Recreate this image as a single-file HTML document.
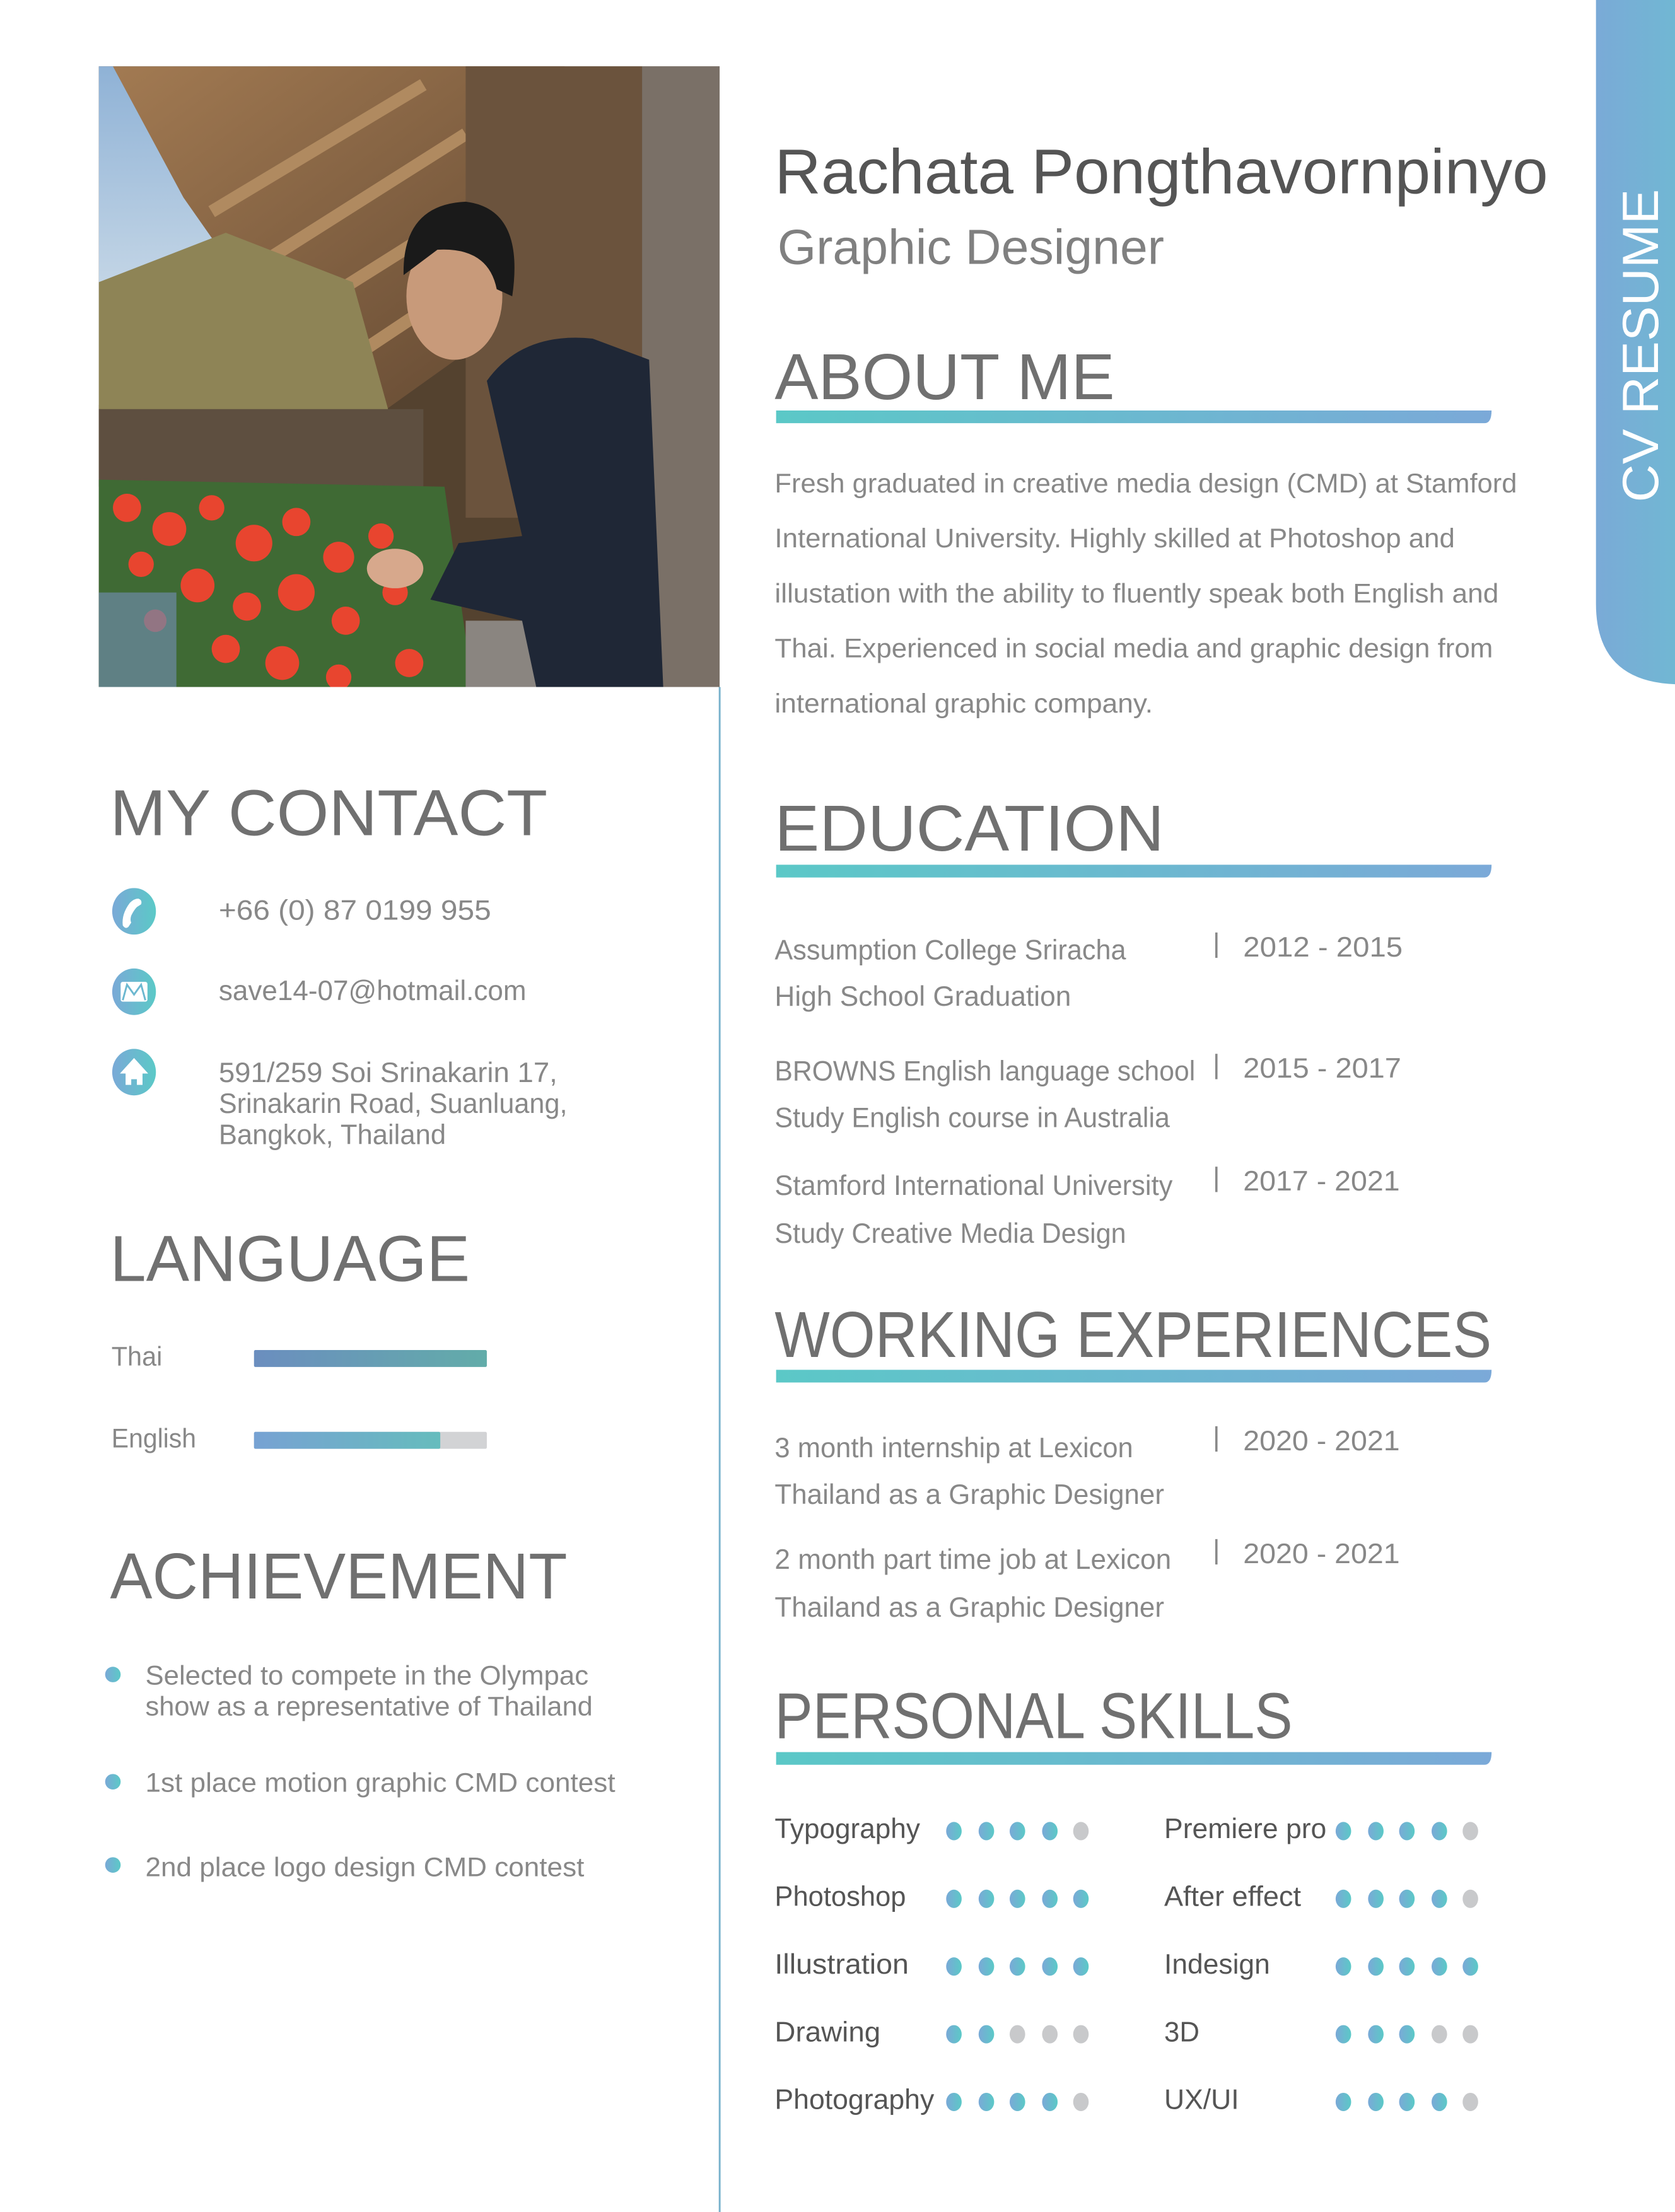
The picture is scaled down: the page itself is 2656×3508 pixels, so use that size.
<!DOCTYPE html>
<html><head><meta charset="utf-8"><style>
html,body{margin:0;padding:0;background:#fff;}
svg{display:block;}
text{font-family:"Liberation Sans",sans-serif;}
</style></head><body>
<svg xmlns="http://www.w3.org/2000/svg" width="2656" height="3508" viewBox="0 0 1187 1568" preserveAspectRatio="none">
<defs>
<linearGradient id="bar" x1="0" x2="1"><stop offset="0" stop-color="#5bc8c7"/><stop offset="1" stop-color="#7ba9d8"/></linearGradient>
<linearGradient id="tab" x1="0" x2="1"><stop offset="0" stop-color="#7aaad7"/><stop offset="1" stop-color="#71b7d3"/></linearGradient>
<linearGradient id="ic" x1="0" x2="1"><stop offset="0" stop-color="#7aa9d7"/><stop offset="1" stop-color="#5bc9c7"/></linearGradient>
<linearGradient id="thai" x1="0" x2="1"><stop offset="0" stop-color="#6b8ebf"/><stop offset="1" stop-color="#62aca9"/></linearGradient>
<linearGradient id="eng" x1="0" x2="1"><stop offset="0" stop-color="#77a2d3"/><stop offset="1" stop-color="#66bcbd"/></linearGradient>
<linearGradient id="sky" x1="0" y1="0" x2="0" y2="1"><stop offset="0" stop-color="#8fb2d6"/><stop offset="1" stop-color="#dfe8ee"/></linearGradient>
<linearGradient id="wood" x1="0" y1="0" x2="1" y2="1"><stop offset="0" stop-color="#a27a52"/><stop offset="1" stop-color="#5e4530"/></linearGradient>
<clipPath id="ph"><rect x="70" y="47" width="440" height="440"/></clipPath>
</defs>

<!-- photo -->
<g clip-path="url(#ph)">
<rect x="70" y="47" width="440" height="440" fill="#54422f"/>
<rect x="70" y="47" width="120" height="240" fill="url(#sky)"/>
<polygon points="80,47 400,47 420,120 330,250 260,300 200,240 130,140" fill="url(#wood)"/>
<g stroke="#b08a60" stroke-width="9">
<line x1="150" y1="150" x2="300" y2="60"/><line x1="180" y1="190" x2="330" y2="95"/><line x1="210" y1="225" x2="345" y2="140"/><line x1="240" y1="260" x2="345" y2="190"/>
</g>
<polygon points="70,200 160,165 250,200 275,290 230,300 70,290" fill="#8e8456"/>
<rect x="70" y="290" width="230" height="55" fill="#5e4f40"/>
<rect x="330" y="47" width="125" height="320" fill="#6b533d"/>
<rect x="455" y="47" width="55" height="440" fill="#7a7067"/>
<polygon points="70,340 315,345 335,487 70,487" fill="#3f6a34"/>
<g fill="#e8452f">
<circle cx="90" cy="360" r="10"/><circle cx="120" cy="375" r="12"/><circle cx="150" cy="360" r="9"/><circle cx="180" cy="385" r="13"/><circle cx="210" cy="370" r="10"/><circle cx="240" cy="395" r="11"/><circle cx="270" cy="380" r="9"/>
<circle cx="100" cy="400" r="9"/><circle cx="140" cy="415" r="12"/><circle cx="175" cy="430" r="10"/><circle cx="210" cy="420" r="13"/><circle cx="245" cy="440" r="10"/><circle cx="280" cy="420" r="9"/>
<circle cx="160" cy="460" r="10"/><circle cx="200" cy="470" r="12"/><circle cx="240" cy="480" r="9"/><circle cx="290" cy="470" r="10"/><circle cx="110" cy="440" r="8"/>
</g>
<rect x="70" y="420" width="55" height="67" fill="#6d8aa6" opacity="0.7"/>
<polygon points="330,440 460,440 470,487 330,487" fill="#8a8580"/>
<path d="M345,270 Q370,235 420,240 L460,255 L470,487 L380,487 L370,440 L305,425 L325,385 L370,380 Z" fill="#1f2736"/>
<ellipse cx="322" cy="210" rx="34" ry="45" fill="#c89a7a"/>
<path d="M286,195 Q285,145 330,143 Q372,148 363,210 L352,205 Q346,175 310,177 Z" fill="#1a1a1a"/>
<ellipse cx="280" cy="403" rx="20" ry="14" fill="#d7a88c"/>
</g>

<!-- vertical line -->
<line x1="510" y1="487" x2="510" y2="1568" stroke="#78b2cc" stroke-width="1.3"/>

<!-- CV tab -->
<path d="M1131,0 H1187 V485 Q1131,483 1131,428 Z" fill="url(#tab)"/>
<text transform="translate(1175,245) rotate(-90)" text-anchor="middle" font-size="36" fill="#fff" textLength="222" lengthAdjust="spacingAndGlyphs">CV RESUME</text>

<!-- header -->
<text x="549" y="137" font-size="45" fill="#555" textLength="548" lengthAdjust="spacingAndGlyphs">Rachata Pongthavornpinyo</text>
<text x="551" y="187" font-size="35" fill="#808080" textLength="274" lengthAdjust="spacingAndGlyphs">Graphic Designer</text>

<!-- section headings -->
<g fill="#707070" font-size="46">
<text x="549" y="283" textLength="241" lengthAdjust="spacingAndGlyphs">ABOUT ME</text>
<text x="549" y="603" textLength="276" lengthAdjust="spacingAndGlyphs">EDUCATION</text>
<text x="549" y="962" textLength="508" lengthAdjust="spacingAndGlyphs">WORKING EXPERIENCES</text>
<text x="549" y="1232" textLength="367" lengthAdjust="spacingAndGlyphs">PERSONAL SKILLS</text>
<text x="78" y="592" textLength="310" lengthAdjust="spacingAndGlyphs">MY CONTACT</text>
<text x="78" y="908" textLength="255" lengthAdjust="spacingAndGlyphs">LANGUAGE</text>
<text x="78" y="1133" textLength="324" lengthAdjust="spacingAndGlyphs">ACHIEVEMENT</text>
</g>
<g fill="url(#bar)">
<path d="M550,291 H1057 Q1057,300 1052,300 H550 Z"/>
<path d="M550,613 H1057 Q1057,622 1052,622 H550 Z"/>
<path d="M550,971 H1057 Q1057,980 1052,980 H550 Z"/>
<path d="M550,1242 H1057 Q1057,1251 1052,1251 H550 Z"/>
</g>

<!-- about paragraph -->
<g fill="#888" font-size="19">
<text x="549" y="349" textLength="526" lengthAdjust="spacingAndGlyphs">Fresh graduated in creative media design (CMD) at Stamford</text>
<text x="549" y="388" textLength="482" lengthAdjust="spacingAndGlyphs">International University. Highly skilled at Photoshop and</text>
<text x="549" y="427" textLength="513" lengthAdjust="spacingAndGlyphs">illustation with the ability to fluently speak both English and</text>
<text x="549" y="466" textLength="509" lengthAdjust="spacingAndGlyphs">Thai. Experienced in social media and graphic design from</text>
<text x="549" y="505" textLength="268" lengthAdjust="spacingAndGlyphs">international graphic company.</text>
</g>

<!-- education / work -->
<g fill="#888" font-size="20">
<text x="549" y="680" textLength="249" lengthAdjust="spacingAndGlyphs">Assumption College Sriracha</text>
<text x="549" y="713" textLength="210" lengthAdjust="spacingAndGlyphs">High School Graduation</text>
<text x="549" y="766" textLength="298" lengthAdjust="spacingAndGlyphs">BROWNS English language school</text>
<text x="549" y="799" textLength="280" lengthAdjust="spacingAndGlyphs">Study English course in Australia</text>
<text x="549" y="847" textLength="282" lengthAdjust="spacingAndGlyphs">Stamford International University</text>
<text x="549" y="881" textLength="249" lengthAdjust="spacingAndGlyphs">Study Creative Media Design</text>
<text x="549" y="1033" textLength="254" lengthAdjust="spacingAndGlyphs">3 month internship at Lexicon</text>
<text x="549" y="1066" textLength="276" lengthAdjust="spacingAndGlyphs">Thailand as a Graphic Designer</text>
<text x="549" y="1112" textLength="281" lengthAdjust="spacingAndGlyphs">2 month part time job at Lexicon</text>
<text x="549" y="1146" textLength="276" lengthAdjust="spacingAndGlyphs">Thailand as a Graphic Designer</text>
<text x="881" y="678" textLength="113" lengthAdjust="spacingAndGlyphs">2012 - 2015</text>
<text x="881" y="764" textLength="112" lengthAdjust="spacingAndGlyphs">2015 - 2017</text>
<text x="881" y="844" textLength="111" lengthAdjust="spacingAndGlyphs">2017 - 2021</text>
<text x="881" y="1028" textLength="111" lengthAdjust="spacingAndGlyphs">2020 - 2021</text>
<text x="881" y="1108" textLength="111" lengthAdjust="spacingAndGlyphs">2020 - 2021</text>
</g>
<g stroke="#888" stroke-width="1.6">
<line x1="862" y1="661" x2="862" y2="679"/>
<line x1="862" y1="747" x2="862" y2="765"/>
<line x1="862" y1="827" x2="862" y2="845"/>
<line x1="862" y1="1011" x2="862" y2="1029"/>
<line x1="862" y1="1091" x2="862" y2="1109"/>
</g>

<!-- skills -->
<g fill="#555" font-size="20">
<text x="549" y="1303" textLength="103" lengthAdjust="spacingAndGlyphs">Typography</text>
<text x="549" y="1351" textLength="93" lengthAdjust="spacingAndGlyphs">Photoshop</text>
<text x="549" y="1399" textLength="95" lengthAdjust="spacingAndGlyphs">Illustration</text>
<text x="549" y="1447" textLength="75" lengthAdjust="spacingAndGlyphs">Drawing</text>
<text x="549" y="1495" textLength="113" lengthAdjust="spacingAndGlyphs">Photography</text>
<text x="825" y="1303" textLength="115" lengthAdjust="spacingAndGlyphs">Premiere pro</text>
<text x="825" y="1351" textLength="97" lengthAdjust="spacingAndGlyphs">After effect</text>
<text x="825" y="1399" textLength="75" lengthAdjust="spacingAndGlyphs">Indesign</text>
<text x="825" y="1447" textLength="25" lengthAdjust="spacingAndGlyphs">3D</text>
<text x="825" y="1495" textLength="53" lengthAdjust="spacingAndGlyphs">UX/UI</text>
</g>
<g fill="url(#ic)">
<ellipse cx="676" cy="1298" rx="5.5" ry="6.5"/><ellipse cx="699" cy="1298" rx="5.5" ry="6.5"/><ellipse cx="721" cy="1298" rx="5.5" ry="6.5"/><ellipse cx="744" cy="1298" rx="5.5" ry="6.5"/>
<ellipse cx="676" cy="1346" rx="5.5" ry="6.5"/><ellipse cx="699" cy="1346" rx="5.5" ry="6.5"/><ellipse cx="721" cy="1346" rx="5.5" ry="6.5"/><ellipse cx="744" cy="1346" rx="5.5" ry="6.5"/><ellipse cx="766" cy="1346" rx="5.5" ry="6.5"/>
<ellipse cx="676" cy="1394" rx="5.5" ry="6.5"/><ellipse cx="699" cy="1394" rx="5.5" ry="6.5"/><ellipse cx="721" cy="1394" rx="5.5" ry="6.5"/><ellipse cx="744" cy="1394" rx="5.5" ry="6.5"/><ellipse cx="766" cy="1394" rx="5.5" ry="6.5"/>
<ellipse cx="676" cy="1442" rx="5.5" ry="6.5"/><ellipse cx="699" cy="1442" rx="5.5" ry="6.5"/>
<ellipse cx="676" cy="1490" rx="5.5" ry="6.5"/><ellipse cx="699" cy="1490" rx="5.5" ry="6.5"/><ellipse cx="721" cy="1490" rx="5.5" ry="6.5"/><ellipse cx="744" cy="1490" rx="5.5" ry="6.5"/>
<ellipse cx="952" cy="1298" rx="5.5" ry="6.5"/><ellipse cx="975" cy="1298" rx="5.5" ry="6.5"/><ellipse cx="997" cy="1298" rx="5.5" ry="6.5"/><ellipse cx="1020" cy="1298" rx="5.5" ry="6.5"/>
<ellipse cx="952" cy="1346" rx="5.5" ry="6.5"/><ellipse cx="975" cy="1346" rx="5.5" ry="6.5"/><ellipse cx="997" cy="1346" rx="5.5" ry="6.5"/><ellipse cx="1020" cy="1346" rx="5.5" ry="6.5"/>
<ellipse cx="952" cy="1394" rx="5.5" ry="6.5"/><ellipse cx="975" cy="1394" rx="5.5" ry="6.5"/><ellipse cx="997" cy="1394" rx="5.5" ry="6.5"/><ellipse cx="1020" cy="1394" rx="5.5" ry="6.5"/><ellipse cx="1042" cy="1394" rx="5.5" ry="6.5"/>
<ellipse cx="952" cy="1442" rx="5.5" ry="6.5"/><ellipse cx="975" cy="1442" rx="5.5" ry="6.5"/><ellipse cx="997" cy="1442" rx="5.5" ry="6.5"/>
<ellipse cx="952" cy="1490" rx="5.5" ry="6.5"/><ellipse cx="975" cy="1490" rx="5.5" ry="6.5"/><ellipse cx="997" cy="1490" rx="5.5" ry="6.5"/><ellipse cx="1020" cy="1490" rx="5.5" ry="6.5"/>
</g>
<g fill="#c8c9cb">
<ellipse cx="766" cy="1298" rx="5.5" ry="6.5"/>
<ellipse cx="721" cy="1442" rx="5.5" ry="6.5"/><ellipse cx="744" cy="1442" rx="5.5" ry="6.5"/><ellipse cx="766" cy="1442" rx="5.5" ry="6.5"/>
<ellipse cx="766" cy="1490" rx="5.5" ry="6.5"/>
<ellipse cx="1042" cy="1298" rx="5.5" ry="6.5"/>
<ellipse cx="1042" cy="1346" rx="5.5" ry="6.5"/>
<ellipse cx="1020" cy="1442" rx="5.5" ry="6.5"/><ellipse cx="1042" cy="1442" rx="5.5" ry="6.5"/>
<ellipse cx="1042" cy="1490" rx="5.5" ry="6.5"/>
</g>

<!-- contact -->
<g fill="url(#ic)">
<ellipse cx="95" cy="646" rx="15.5" ry="16.5"/>
<ellipse cx="95" cy="703" rx="15.5" ry="16.5"/>
<ellipse cx="95" cy="760" rx="15.5" ry="16.5"/>
</g>
<path d="M98,637 Q101,638 100,641 L97,643 Q95,645 93,649 Q92,652 93,654 L91,657 Q89,659 87,656 Q86,648 92,640 Q95,637 98,637 Z" fill="#fff"/>
<rect x="85.5" y="696" width="19" height="14" rx="1.5" fill="#fff"/>
<path d="M87,709 L90,698 L95,705 L100,698 L103,709" fill="none" stroke="#6cb8d0" stroke-width="1.3"/>
<path d="M95,750 L105,761 L101,761 L101,769 L97,769 L97,765 L93,765 L93,769 L89,769 L89,761 L85,761 Z" fill="#fff"/>
<g fill="#888" font-size="20">
<text x="155" y="652" textLength="193" lengthAdjust="spacingAndGlyphs">+66 (0) 87 0199 955</text>
<text x="155" y="709" textLength="218" lengthAdjust="spacingAndGlyphs">save14-07@hotmail.com</text>
<text x="155" y="767" textLength="240" lengthAdjust="spacingAndGlyphs">591/259 Soi Srinakarin 17,</text>
<text x="155" y="789" textLength="247" lengthAdjust="spacingAndGlyphs">Srinakarin Road, Suanluang,</text>
<text x="155" y="811" textLength="161" lengthAdjust="spacingAndGlyphs">Bangkok, Thailand</text>
</g>

<!-- language -->
<g fill="#888" font-size="19">
<text x="79" y="968" textLength="36" lengthAdjust="spacingAndGlyphs">Thai</text>
<text x="79" y="1026" textLength="60" lengthAdjust="spacingAndGlyphs">English</text>
</g>
<rect x="180" y="957" width="165" height="12" rx="1" fill="url(#thai)"/>
<rect x="180" y="1015" width="165" height="12" rx="1" fill="#d2d3d5"/>
<rect x="180" y="1015" width="132" height="12" rx="1" fill="url(#eng)"/>

<!-- achievement -->
<g fill="url(#ic)">
<circle cx="80" cy="1187" r="5.5"/><circle cx="80" cy="1263" r="5.5"/><circle cx="80" cy="1322" r="5.5"/>
</g>
<g fill="#888" font-size="19">
<text x="103" y="1194" textLength="314" lengthAdjust="spacingAndGlyphs">Selected to compete in the Olympac</text>
<text x="103" y="1216" textLength="317" lengthAdjust="spacingAndGlyphs">show as a representative of Thailand</text>
<text x="103" y="1270" textLength="333" lengthAdjust="spacingAndGlyphs">1st place motion graphic CMD contest</text>
<text x="103" y="1330" textLength="311" lengthAdjust="spacingAndGlyphs">2nd place logo design CMD contest</text>
</g>
</svg>
</body></html>
